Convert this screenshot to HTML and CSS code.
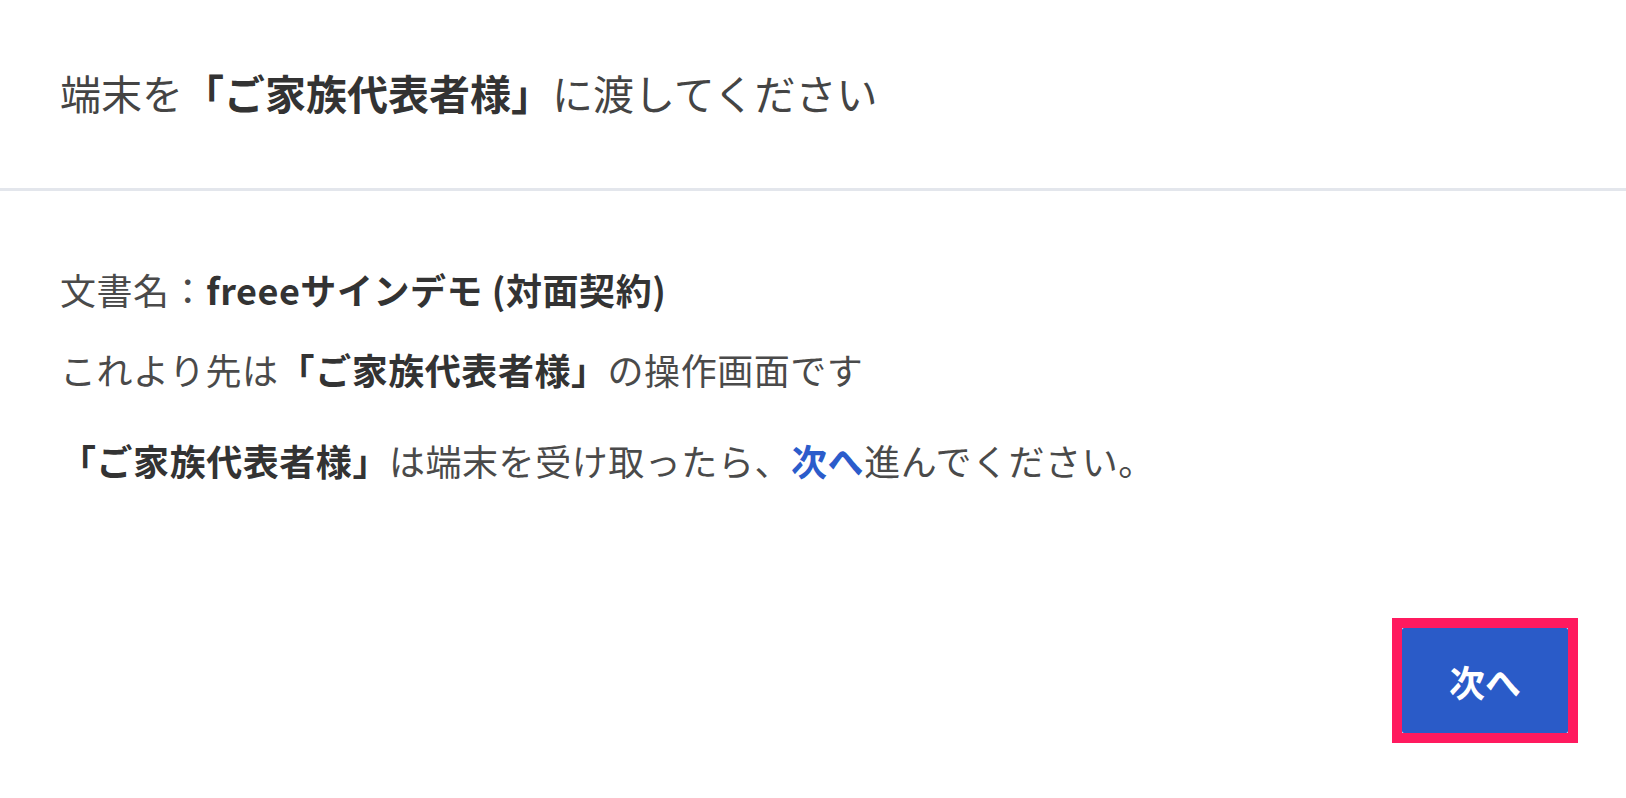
FILE: index.html
```html
<!DOCTYPE html>
<html lang="ja">
<head>
<meta charset="utf-8">
<title>端末を渡してください</title>
<link rel="stylesheet" href="styles.css">
</head>
<body>
<div class="page">
  <header class="header">
    <h1 class="title">端末を<strong>「ご家族代表者様」</strong>に渡してください</h1>
  </header>
  <main class="content">
    <p class="doc-name">文書名：<strong>freeeサインデモ (対面契約)</strong></p>
    <p class="line2">これより先は<strong>「ご家族代表者様」</strong>の操作画面です</p>
    <p class="line3"><strong>「ご家族代表者様」</strong>は端末を受け取ったら、<span class="link">次へ</span>進んでください。</p>
    <div class="actions">
      <div class="highlight">
        <button class="next-btn" type="button">次へ</button>
      </div>
    </div>
  </main>
</div>
</body>
</html>
```
FILE: styles.css
```css
* { box-sizing: border-box; }
html, body { margin: 0; padding: 0; background: #ffffff; }
body {
  font-family: "Noto Sans CJK JP", "Noto Sans", sans-serif;
  color: #4a4a4a;
}
.page { width: 1626px; height: 798px; overflow: hidden; }
.header {
  height: 191px;
  padding: 63px 60px 0 60px;
  border-bottom: 3px solid #e3e6ec;
}
.title {
  margin: 0;
  font-size: 41px;
  line-height: 58px;
  font-weight: 400;
  color: #444444;
}
strong { font-weight: 700; color: #333333; }
.content {
  padding: 71px 48px 0 60px;
  display: flex;
  flex-direction: column;
}
.content p {
  margin: 0;
  font-size: 36px;
  line-height: 54px;
  letter-spacing: 0.55px;
}
.line2 { margin-top: 26px !important; }
.line3 { margin-top: 37px !important; }
.link { color: #2b5ccb; font-weight: 700; }
.actions {
  display: flex;
  justify-content: flex-end;
  margin-top: 131px;
}
.highlight {
  border: 10px solid #ff1a5f;
  display: flex;
}
.next-btn {
  width: 166px;
  height: 105px;
  background: #2a5bc8;
  color: #ffffff;
  border: none;
  border-radius: 2px;
  font-family: "Noto Sans CJK JP", sans-serif;
  font-size: 36px;
  font-weight: 700;
  padding: 0;
}
```
